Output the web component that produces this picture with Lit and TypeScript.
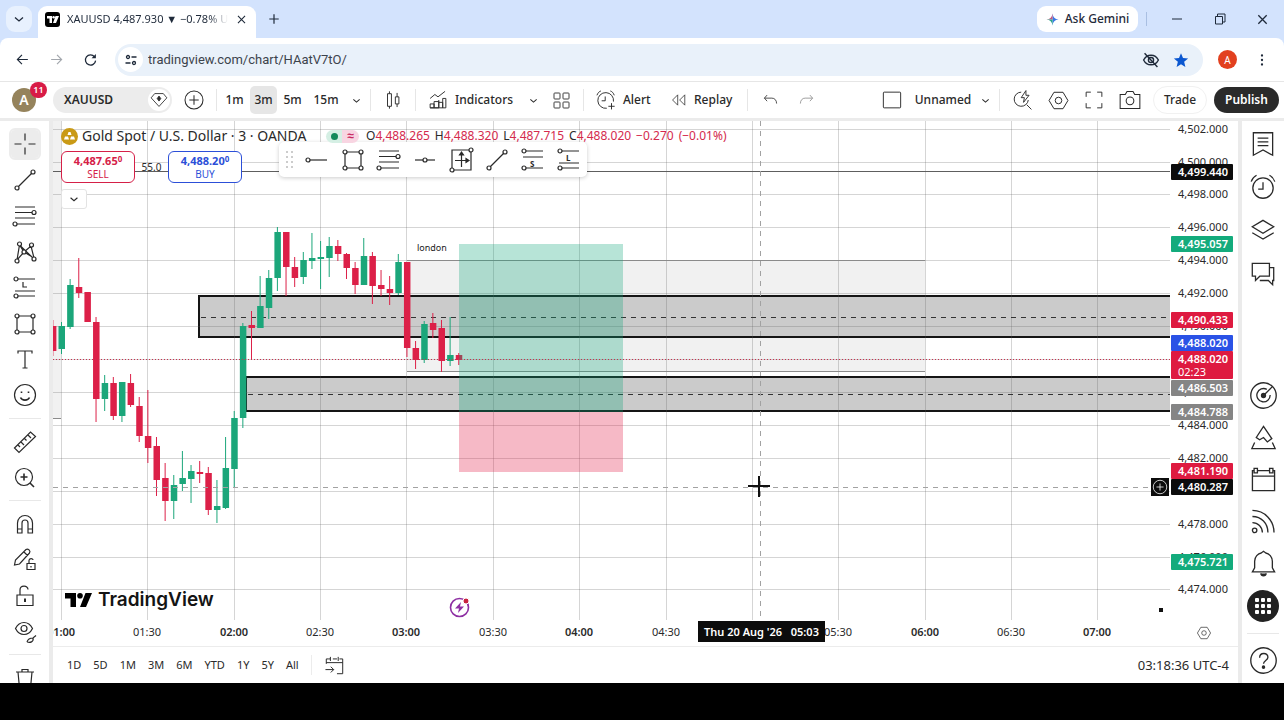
import { LitElement, html, svg, css } from "lit";
import { customElement } from "lit/decorators.js";
import { classMap } from "lit/directives/class-map.js";
import { styleMap } from "lit/directives/style-map.js";

const dot = (x: number, y: number, r = 2) => svg`<circle cx=${x} cy=${y} r=${r} fill="#fff"></circle>`;

/* Glyphs drawn on a 28 x 28 grid with a thin outline. */
const GLYPHS: Record<string, any> = {
  cross: svg`<path d="M14 3.500v7M14 17.500v7M3.500 14h7M17.500 14h7"/>`,
  trend: svg`<path d="M7 21L21 7"/>${dot(6, 22)}${dot(22, 6)}`,
  fib: svg`<path d="M4 5h20M4 10.500h18M4 16h20M6 22h18"/>${dot(23, 10.5)}${dot(4, 22)}`,
  pattern: svg`<path d="M6 22L8.500 7 13 14 20 8 23 20 13 14zM8.500 7L22 20"/>${dot(6, 23)}${dot(8.5, 6)}${dot(13, 14)}${dot(20.5, 7)}${dot(23, 21)}`,
  forecast: svg`<path d="M6 5h18M4 17h20M6 22h18M12 8v5h4"/>${dot(5, 5)}${dot(5, 22)}`,
  rect: svg`<path d="M6 6h16v16H6z"/>${dot(6, 6)}${dot(22, 6)}${dot(6, 22)}${dot(22, 22)}`,
  text: svg`<path d="M7 7.500V5h14v2.500M14 5v17M11.500 22h5"/>`,
  smile: svg`<circle cx="14" cy="13" r="10.500"/><path d="M9.500 15.500c1.500 3.500 7.500 3.500 9 0M10.500 9.500v1.500M17.500 9.500v1.500" stroke-width="1.600"/>`,
  ruler: svg`<path d="M3.500 20L19.500 4l5 4.500-16.500 16zM7 17l2 2M10 14l3 3M13.500 10.500l2 2M17 7l3 3"/>`,
  zoom: svg`<circle cx="13" cy="13" r="8.500"/><path d="M19 19l4 4M13 9.500v7M9.500 13h7" stroke-width="1.600"/>`,
  magnet: svg`<path d="M6.500 23V13a7.500 7.500 0 0 1 15 0v10H17V13a3 3 0 0 0-6 0v10zM6.500 19H11M17 19h4.500"/>`,
  pencilLock: svg`<path d="M3.500 19l1-5L15 3.500c2-1.500 5 1.500 3.500 3.500L8.500 18z M13 6l3.500 3.500M16 17.500h8v6h-8zM18 17v-2.500c0-2.500 4-2.500 4-.5M20 20v1.500"/>`,
  lock: svg`<path d="M6 13h16v10.500H6zM9 13V8c0-5 8-5 8-.5"/><path d="M14 16.500v3.500" stroke-width="2"/>`,
  eye: svg`<path d="M4.500 10.500c4-8 13-8 17 0-4 8-13 8-17 0z"/><circle cx="13" cy="10.500" r="3"/><path d="M16 24c1-3.500 3-4 6-4l3-2.500M22 20c1 4-3 5-6 4"/>`,
  trash: svg`<path d="M5 8h18M11 8V5.500h6V8M7 8l1.500 16h11L21 8"/>`,
  list: svg`<path d="M5 3.500h18v21l-9-5-9 5zM9 8.500h10M9 12h10M9 15.500h10"/>`,
  alarm: svg`<circle cx="14" cy="15" r="9.500"/><path d="M14 9.500V16H9.500M3 9c1-3 3-5 5-6M25 9c-1-3-3-5-5-6" />`,
  layers: svg`<path d="M14 5l10 6-10 6-10-6zM4 16.500l10 6 10-6"/>`,
  chat: svg`<path d="M4 5h16v12h-9l-4 4v-4H4zM20 9h4v12h-1v4l-4-4h-8"/>`,
  radar: svg`<circle cx="14" cy="14" r="11.500"/><path d="M17 8.500a6 6 0 1 0 3 5M14 14l8-8"/><circle cx="14" cy="14" r="1.800" fill="currentColor"/>`,
  hotlist: svg`<path d="M14 4l7.500 11-4 3-3.500-4-3.500 2-3-2zM6 18.500L3.500 24h21L22 18.500"/>`,
  calendar: svg`<path d="M9 6h10M5 6H4v18h20V6h-1M4 11h20M5.500 4h3v4h-3zM19.500 4h3v4h-3z"/>`,
  rss: svg`<circle cx="6" cy="22" r="2"/><path d="M4 15c5 0 9 4 9 9M4 9.500c8 0 14 6 14 14.500M4 4c11 0 19.500 9 19.500 20"/>`,
  bell: svg`<path d="M4 21.500h20l-2-3.500v-6c0-4-3-7-6-7.500L14 3l-2 1.500C9 5 6 8 6 12v6z"/><path d="M11.500 23c.5 3 4.500 3 5 0" fill="currentColor"/>`,
  help: svg`<circle cx="14" cy="14" r="11.500"/><path d="M10.500 11.500c0-5 7.500-5 7.500-.5 0 3-4 3-4 6"/><circle cx="14" cy="20" r="1" fill="currentColor"/>`,
  plusCircle: svg`<circle cx="14" cy="14" r="10.500"/><path d="M14 8.500v11M8.500 14h11"/>`,
  candles: svg`<path d="M7 6h5v16H7zM9.500 3v3M9.500 22v3M17 10h4.500v9H17zM19.200 5v5M19.200 19v4"/>`,
  indicators: svg`<path d="M4 24v-5h5v5zM9 24v-8h6v8zM15 24V14M15 17h5v7M20 24V12h4v12H4M4 12l6-5 4 3 9-7"/>`,
  grid: svg`<rect x="4" y="4" width="8" height="8" rx="1"/><rect x="16" y="4" width="8" height="8" rx="1"/><rect x="4" y="16" width="8" height="8" rx="1"/><rect x="16" y="16" width="8" height="8" rx="1"/>`,
  alert: svg`<path d="M23.500 16a10 10 0 1 0-8.500 8.500M13 9.500V15H8.500M2.500 8c1-3 3-5 5-5.500M24.500 8c-1-3-3-5-5-5.500M21 18v8M17 22h8"/>`,
  replay: svg`<path d="M12 6v16L4 14zM23 6v16l-8-8z"/>`,
  undo: svg`<path d="M9 6L5 10.500 9 15M5 10.500h11c4 0 7 3 7 8"/>`,
  redo: svg`<path d="M19 6l4 4.500-4 4.500M23 10.500H12c-4 0-7 3-7 8"/>`,
  square: svg`<rect x="3" y="4" width="22" height="20" rx="1"/>`,
  quick: svg`<path d="M13 4a9 9 0 1 0 9 10M20 20l6 6M19 2l-6 9h4l-1 6 7-9h-4z"/>`,
  hex: svg`<path d="M8.500 4h11l6 10-6 10h-11L2.500 14z"/><circle cx="14" cy="14" r="4"/>`,
  full: svg`<path d="M4 10V4h6M18 4h6v6M24 18v6h-6M10 24H4v-6"/>`,
  camera: svg`<path d="M2.500 7.500h6L10.500 4h7l2 3.500h6V24h-23z"/><circle cx="14" cy="15" r="4.500"/>`,
  diamond: svg`<path d="M8 5h12l5 6-11 12L3 11z"/><path d="M14 8.500l2.500 3.500-2.500 3.500-2.500-3.500z" fill="currentColor"/>`,
  chevron: svg`<path d="M6 11l8 7 8-7" stroke-width="2.600"/>`,
  ray: svg`<path d="M5 14h19"/>${dot(5, 14)}`,
  hline: svg`<path d="M4 14h20"/>${dot(14, 14)}`,
  longpos: svg`<path d="M5 4h19v20H5zM14.500 7v14M8 14.500h12"/><path d="M14.500 6l-2 3h4zM22 14.500l-3-2v4z" fill="currentColor"/>${dot(5, 24)}${dot(24, 4)}`,
  short: svg`<path d="M6 5h18M4 11h20M6 22h18"/><text class="tiny" x="11" y="20.500">S</text>${dot(5, 5)}${dot(5, 22)}`,
  long: svg`<path d="M6 5h18M4 17h20M6 22h18"/><text class="tiny" x="11" y="15">L</text>${dot(5, 5)}${dot(5, 22)}`,
  goto: svg`<path d="M7 6h2M12 6h5M20 6h4v18h-7M4 12V6h3M4 10.500h20M9 3.500v5M18.500 3.500v5M3 19h10M9.500 15.500L13 19l-3.500 3.500"/>`,
  back: svg`<path d="M24 14H5M13 5.500L4.500 14l8.500 8.500" stroke-width="2.200"/>`,
  forward: svg`<path d="M4 14h19M15 5.500l8.500 8.500-8.500 8.500" stroke-width="2.200"/>`,
  reload: svg`<path d="M21.500 9a9.500 9.500 0 1 0 2 7" stroke-width="2.400"/><path d="M24 3.500v8h-8z" fill="currentColor" stroke="none"/>`,
  tune: svg`<g stroke-width="2.600"><circle cx="8" cy="8" r="3"/><path d="M15 8h10M3 20h10"/><circle cx="20" cy="20" r="3"/></g>`,
  eyeOff: svg`<g stroke-width="2.200"><path d="M2.500 14c5-10 18-10 23 0-5 10-18 10-23 0zM4 3.500L24 25"/><circle cx="14" cy="14" r="4"/></g>`,
  star: svg`<path d="M14 2l3.500 8.500 9 .7-7 6 2.200 9L14 21.500 6.300 26.200l2.200-9-7-6 9-.7z" fill="#0b57d0" stroke="none"/>`,
  more: svg`<g fill="currentColor" stroke="none"><circle cx="14" cy="5" r="2.300"/><circle cx="14" cy="14" r="2.300"/><circle cx="14" cy="23" r="2.300"/></g>`,
  close: svg`<path d="M5 5l18 18M23 5L5 23" stroke-width="2.800"/>`,
  plus: svg`<path d="M14 3v22M3 14h22" stroke-width="2.800"/>`,
  min: svg`<path d="M4 14h20" stroke-width="2"/>`,
  restore: svg`<path d="M5 9h14v15H5zM9 9V4h15v16h-5" stroke-width="2"/>`,
  spark: svg`<path d="M14 1c1 8 5 12 13 13-8 1-12 5-13 13z" fill="#3b79e6" stroke="none"/><path d="M14 1v13H1C9 13 13 9 14 1z" fill="#c4567e" stroke="none"/><path d="M1 14h13v13C13 19 9 15 1 14z" fill="#2ea58a" stroke="none"/>`,
};

const glyph = (name: string, size = 28) => html`<svg
  class="glyph" width=${size} height=${size} viewBox="0 0 28 28" aria-hidden="true"
>${GLYPHS[name]}</svg>`;

const shared = css`
  * { box-sizing: border-box; }
  button, input { font: inherit; color: inherit; border: 0; background: none; padding: 0; margin: 0; }
  button { display: flex; align-items: center; justify-content: center; flex: none; white-space: nowrap; }
  .glyph { fill: none; stroke: currentColor; stroke-width: 1.2; display: block; flex: none; }
  .tiny { font: 700 8px "Noto Sans", sans-serif; fill: currentColor; stroke: none; }
`;

@customElement("browser-bar")
class BrowserBar extends LitElement {
  static styles = [shared, css`
    :host { display: block; background: #d3e3fd; color: #1f2a3a; font: 12px/16px "Noto Sans", sans-serif; }
    .strip { display: flex; height: 38px; align-items: center; padding-left: 6px; }
    .search { width: 26px; height: 26px; border-radius: 9px; background: #e8f1fe; }
    .tab { display: flex; align-items: center; align-self: flex-end; width: 218px; height: 32px; margin-left: 6px; padding: 0 9px 6px 7px; background: #fff; border-radius: 9px 9px 0 0; }
    .fav { width: 15px; height: 15px; flex: none; }
    .title { flex: 1; margin: 0 8px 0 7px; overflow: hidden; white-space: nowrap; font-size: 11px; -webkit-mask-image: linear-gradient(90deg, #000 88%, transparent); mask-image: linear-gradient(90deg, #000 88%, transparent); }
    .new { width: 36px; height: 28px; }
    .gem { margin-left: auto; width: 101px; height: 26px; gap: 6px; border-radius: 9px; background: #fff; font-weight: 500; }
    .rule { width: 1px; height: 14px; margin: 0 8px; background: #a9bfe2; }
    .win { width: 43px; height: 30px; }
    .nav { display: flex; height: 43px; align-items: center; background: #fff; border-radius: 8px 8px 0 0; padding: 0 5px; }
    .step { width: 34px; height: 30px; }
    .dim { color: #a3a7ad; }
    .address { display: flex; flex: 1; align-items: center; height: 32px; margin-left: 8px; padding: 0 7px 0 3px; border-radius: 16px; background: #e9f1fa; }
    .info { width: 25px; height: 25px; border-radius: 50%; background: #fff; }
    .url { flex: 1; min-width: 0; margin-left: 5px; font: 13px/18px Roboto, sans-serif; color: #3c434c; outline: 0; }
    .mark { width: 30px; height: 24px; }
    .avatar { width: 19px; height: 19px; border-radius: 50%; background: #e2401f; color: #fff; font-size: 10px; margin: 0 8px 0 15px; }
  `];
  render() {
    return html`
      <div class="strip">
        <button class="search" aria-label="Search tabs">${glyph("chevron", 14)}</button>
        <div class="tab">
          <svg class="fav" viewBox="0 0 15 15" aria-hidden="true"><rect width="15" height="15" rx="3"/><path d="M2 4h5v7H4.500V6.500H2zM10.500 4H14l-3 7H8z" fill="#fff"/><circle cx="8.600" cy="5.200" r="1.200" fill="#fff"/></svg>
          <span class="title">XAUUSD 4,487.930 ▼ −0.78% U</span>
          <button aria-label="Close tab">${glyph("close", 11)}</button>
        </div>
        <button class="new" aria-label="New tab">${glyph("plus", 12)}</button>
        <button class="gem">${glyph("spark", 13)}Ask Gemini</button>
        <span class="rule"></span>
        <button class="win" aria-label="Minimise">${glyph("min", 14)}</button>
        <button class="win" aria-label="Restore">${glyph("restore", 14)}</button>
        <button class="win" aria-label="Close">${glyph("close", 13)}</button>
      </div>
      <div class="nav">
        <button class="step" aria-label="Back">${glyph("back", 15)}</button>
        <button class="step dim" aria-label="Forward">${glyph("forward", 15)}</button>
        <button class="step" aria-label="Reload">${glyph("reload", 15)}</button>
        <div class="address">
          <button class="info" aria-label="Site information">${glyph("tune", 14)}</button>
          <input class="url" aria-label="Address" .value=${"tradingview.com/chart/HAatV7tO/"} />
          <button class="mark" aria-label="Tracking protection">${glyph("eyeOff", 18)}</button>
          <button class="mark" aria-label="Bookmark">${glyph("star", 16)}</button>
        </div>
        <button class="avatar" aria-label="Profile">A</button>
        <button class="step" aria-label="Menu">${glyph("more", 14)}</button>
      </div>`;
  }
}

@customElement("chart-header")
class ChartHeader extends LitElement {
  static styles = [shared, css`
    :host { display: flex; align-items: center; height: 36px; padding: 0 5px 0 12px; background: #fff; color: #2a2a2a; font: 500 12px/16px "Noto Sans", sans-serif; }
    button { height: 28px; border-radius: 5px; }
    .user { position: relative; width: 24px; height: 24px; border-radius: 50%; background: #95835c; color: #fff; font-size: 14px; font-weight: 600; margin-right: 17px; }
    .badge { position: absolute; left: 18px; top: -6px; width: 17px; height: 16px; border-radius: 8px; background: #d81b46; font-size: 9px; line-height: 16px; font-weight: 600; }
    .symbol { width: 119px; height: 26px; padding: 0 2px 0 11px; border-radius: 13px; background: #ececec; justify-content: space-between; font-weight: 600; }
    .flag { display: grid; place-items: center; width: 22px; height: 22px; border-radius: 50%; background: #fff; }
    .i36 { width: 36px; }
    .add { margin-left: 4px; }
    .rule { width: 1px; height: 22px; margin: 0 4px; background: #e6e6e6; }
    .time { width: 27px; margin-right: 2px; }
    .wide { width: 36px; }
    .on { background: #e6e6e6; }
    .drop { width: 20px; }
    .label { gap: 6px; justify-content: flex-start; padding-left: 7px; }
    .ind { width: 103px; }
    .alert { width: 75px; }
    .replay { width: 80px; }
    .right { display: flex; align-items: center; margin-left: auto; }
    .name { width: 98px; gap: 12px; }
    .dim { color: #8a8a8a; }
    .trade { width: 54px; border: 1px solid #f1f1f1; border-radius: 14px; margin: 0 7px 0 5px; }
    .publish { width: 65px; height: 26px; border-radius: 13px; background: #2a2a2a; color: #fff; font-weight: 600; }
  `];
  render() {
    return html`
      <button class="user" aria-label="Account, 11 notifications">A<span class="badge">11</span></button>
      <button class="symbol">XAUUSD<span class="flag">${glyph("diamond", 20)}</span></button>
      <button class="i36 add" aria-label="Compare">${glyph("plusCircle", 24)}</button>
      <span class="rule"></span>
      ${["1m", "3m", "5m", "15m"].map((t) => html`<button class=${classMap({ time: true, wide: t === "15m", on: t === "3m" })}>${t}</button>`)}
      <button class="drop" aria-label="Intervals">${glyph("chevron", 11)}</button>
      <span class="rule"></span>
      <button class="i36" aria-label="Candles">${glyph("candles", 22)}</button>
      <span class="rule"></span>
      <button class="label ind">${glyph("indicators", 22)}Indicators</button>
      <button class="drop" aria-label="Favourite indicators">${glyph("chevron", 11)}</button>
      <button class="i36" aria-label="Templates">${glyph("grid", 21)}</button>
      <span class="rule"></span>
      <button class="label alert">${glyph("alert", 22)}Alert</button>
      <button class="label replay">${glyph("replay", 18)}Replay</button>
      <span class="rule"></span>
      <button class="i36" aria-label="Undo">${glyph("undo", 19)}</button>
      <button class="i36 dim" aria-label="Redo">${glyph("redo", 19)}</button>
      <div class="right">
        <button class="name">${glyph("square", 22)}Unnamed</button>
        <button class="drop" aria-label="Layouts">${glyph("chevron", 11)}</button>
        <span class="rule"></span>
        <button class="i36" aria-label="Quick search">${glyph("quick", 22)}</button>
        <button class="i36" aria-label="Settings">${glyph("hex", 23)}</button>
        <button class="i36" aria-label="Fullscreen">${glyph("full", 22)}</button>
        <button class="i36" aria-label="Snapshot">${glyph("camera", 24)}</button>
        <button class="trade">Trade</button>
        <button class="publish">Publish</button>
      </div>`;
  }
}

@customElement("drawing-tools")
class DrawingTools extends LitElement {
  static styles = [shared, css`
    :host { display: flex; flex-direction: column; align-items: center; width: 49px; padding-top: 5px; background: #fff; color: #2a2a2a; overflow: hidden; }
    button { width: 36px; height: 36px; }
    .on .glyph { background: #ececec; border-radius: 4px; outline: 2px solid #ececec; }
    .rule { width: 32px; height: 1px; margin: 4px 0 5px; background: #e8e8e8; flex: none; }
  `];
  render() {
    const groups = [
      ["cross", "trend", "fib", "pattern", "forecast", "rect", "text", "smile"],
      ["ruler", "zoom"],
      ["magnet", "pencilLock", "lock", "eye"],
      ["trash"],
    ];
    return groups.map((names, i) => html`
      ${i ? html`<span class="rule"></span>` : ""}
      ${names.map((n) => html`<button class=${n === "cross" ? "on" : ""} aria-label=${n}>${glyph(n, 28)}</button>`)}`);
  }
}

@customElement("side-panel")
class SidePanel extends LitElement {
  static styles = [shared, css`
    :host { display: flex; flex-direction: column; align-items: center; width: 42px; padding: 1px 0 2px; background: #fff; color: #2a2a2a; overflow: hidden; }
    .top, .low { display: flex; flex-direction: column; }
    .top button { width: 42px; height: 43px; }
    .low { margin-top: auto; }
    .low button, .help { width: 42px; height: 42px; }
    .low .last { height: 44px; }
    .apps { display: grid; grid-template-columns: repeat(3, 4px); gap: 2px; place-content: center; width: 32px; height: 32px; border-radius: 50%; background: #222; }
    .cell { height: 4px; background: #fff; border-radius: 1px; }
    .rule { width: 32px; height: 1px; margin: 5px 0; background: #e8e8e8; flex: none; }
  `];
  render() {
    return html`
      <div class="top">${["list", "alarm", "layers", "chat"].map((n) => html`<button aria-label=${n}>${glyph(n, 30)}</button>`)}</div>
      <div class="low">
        ${["radar", "hotlist", "calendar", "rss", "bell"].map((n) => html`<button aria-label=${n}>${glyph(n, 31)}</button>`)}
        <button class="last" aria-label="Apps"><span class="apps">${Array.from({ length: 9 }, () => html`<span class="cell"></span>`)}</span></button>
      </div>
      <span class="rule"></span>
      <button class="help" aria-label="Help">${glyph("help", 31)}</button>`;
  }
}

/* Plot scales: price to vertical position, bar number to horizontal position. */
const priceY = (p: number) => 7.6 + (4502 - p) * 16.46;
const barX = (i: number) => 8.5 + i * 8.636;

/* bar, high, body top, body bottom, low, rising (positions down the plot) */
const BARS: number[][] = [
  [-1, 199, 205, 230, 235, 0], [0, 201, 205, 228, 233, 1], [1, 158, 164, 206, 208, 1], [2, 137, 166, 172, 177, 0],
  [3, 171, 171, 201, 201, 0], [4, 196, 201, 278, 301, 0], [5, 254, 262, 278, 290, 1], [6, 256, 262, 295, 299, 0],
  [7, 261, 261, 295, 301, 1], [8, 253, 262, 284, 286, 0], [9, 276, 285, 315, 321, 0], [10, 269, 315, 327, 342, 0],
  [11, 316, 325, 359, 375, 0], [12, 342, 357, 380, 400, 0], [13, 354, 364, 380, 398, 1], [14, 330, 357, 363, 370, 1],
  [15, 344, 350, 358, 382, 1], [16, 340, 351, 353, 362, 0], [17, 346, 352, 389, 394, 0], [18, 359, 385, 389, 402, 1],
  [19, 316, 347, 387, 388, 1], [20, 290, 297, 348, 366, 1], [21, 202, 205, 297, 307, 1], [22, 190, 204, 207, 238, 0],
  [23, 155, 185, 207, 207, 1], [24, 149, 157, 187, 198, 1], [25, 106, 111, 157, 170, 1], [26, 111, 111, 146, 175, 0],
  [27, 136, 146, 157, 166, 0], [28, 131, 139, 156, 163, 1], [29, 112, 137, 140, 148, 1], [30, 120, 136, 138, 168, 1],
  [31, 116, 125, 137, 156, 1], [32, 119, 125, 133, 140, 0], [33, 132, 133, 147, 158, 0], [34, 141, 147, 164, 173, 0],
  [35, 117, 135, 164, 164, 1], [36, 131, 135, 165, 183, 0], [37, 149, 164, 168, 175, 0], [38, 155, 168, 172, 184, 0],
  [39, 133, 141, 172, 174, 1], [40, 141, 141, 227, 236, 0], [41, 220, 227, 239, 248, 0], [42, 200, 203, 239, 242, 1],
  [43, 192, 202, 209, 217, 0], [44, 199, 207, 240, 251, 0], [45, 196, 234, 240, 245, 1], [46, 232, 234, 239, 244, 0],
];

@customElement("price-chart")
class PriceChart extends LitElement {
  static styles = [shared, css`
    :host { display: grid; grid-template: minmax(0, 1fr) 27px 36px / minmax(0, 1fr) 68px; flex: 1; min-width: 0; background: #fff; color: #2a2a2a; font: 11px/14px "Noto Sans", sans-serif; }
    .plot { position: relative; overflow: hidden; }
    .canvas { position: absolute; inset: 0; width: 100%; height: 100%; display: block; }
    .grid { stroke: #5c5c5c; stroke-opacity: .26; shape-rendering: crispEdges; }
    .shade { fill: #f1f1f1; }
    .edge { stroke: #8b8b8b; }
    .zone { fill: #cbcbcb; stroke: #151515; stroke-width: 2; }
    .mid { stroke: #333; stroke-dasharray: 5 5; }
    .up { fill: #1ba67a; stroke: #1ba67a; }
    .down { fill: #dc2048; stroke: #dc2048; }
    .body { stroke: none; }
    .profit { fill: #12a57b; fill-opacity: .3; }
    .loss { fill: #e4254f; fill-opacity: .32; }
    .last { stroke: #c9304f; stroke-dasharray: 1 2; }
    .level { stroke: #5e5e5e; }
    .aim { stroke: #a2a2a2; stroke-dasharray: 5 5; }
    .pointer { stroke: #111; stroke-width: 2; }
    .note { font: 9px "Noto Sans", sans-serif; fill: #222; }
    .over { position: absolute; left: 8px; top: 4px; }
    .legend { display: flex; align-items: center; height: 22px; font-size: 12px; white-space: nowrap; }
    .coin { width: 17px; height: 17px; margin-right: 4px; flex: none; }
    .name { width: 244px; font-size: 14px; }
    .state { display: flex; align-items: center; justify-content: space-around; width: 33px; height: 13px; border-radius: 7px; background: linear-gradient(90deg, #d5efe4 50%, #f8d5e2 50%); color: #c92760; font-weight: 700; margin-right: 7px; }
    .live { width: 7px; height: 7px; border-radius: 50%; background: #128a5b; }
    .ohlc { display: flex; gap: 5px; }
    .fall { color: #d42a4d; }
    .deal { display: flex; align-items: center; margin-top: 4px; }
    .deal button { flex-direction: column; width: 74px; height: 32px; border: 1px solid; border-radius: 6px; background: #fff; font-size: 10px; line-height: 13px; }
    .deal .sell { color: #d52048; }
    .deal .buy { color: #2c4fd8; }
    .quote { font-size: 11px; font-weight: 700; line-height: 15px; }
    .pip { font-size: 8px; vertical-align: 3px; line-height: 8px; }
    .spread { width: 33px; text-align: center; font-size: 10px; }
    .fold { width: 26px; height: 20px; margin-top: 6px; border: 1px solid #e3e3e3; border-radius: 3px; background: #fff; }
    .palette { position: absolute; left: 226px; top: 21px; display: flex; align-items: center; width: 308px; height: 35px; padding-left: 7px; border-radius: 5px; background: #fff; box-shadow: 0 1px 4px #0003; }
    .palette button { width: 36px; height: 32px; }
    .grip { display: grid; grid-template-columns: 2px 2px; gap: 3px; width: 15px; }
    .speck { width: 2px; height: 2px; background: #ccc; }
    .brand { position: absolute; left: 12px; bottom: 8px; display: flex; align-items: center; gap: 6px; color: #141414; font: 600 19px/24px Inter, sans-serif; }
    .flash { position: absolute; left: 396px; bottom: 2px; width: 21px; height: 21px; }
    .axis { position: relative; }
    .price { position: absolute; left: 1px; width: 62px; height: 16px; margin-top: -8px; padding-left: 7px; line-height: 16px; white-space: nowrap; }
    .tag { color: #fff; font-weight: 600; border-radius: 1px; }
    .tall { height: 28px; line-height: 13px; padding-top: 1px; }
    .black { background: #0c0c0c; }
    .green { background: #13ab7c; }
    .red { background: #de1a40; }
    .blue { background: #2a52e6; }
    .grey { background: #858585; }
    .left { font-weight: 400; }
    .add { position: absolute; left: -19px; width: 18px; height: 18px; margin-top: -9px; background: #0c0c0c; color: #fff; }
    .bead { position: absolute; left: -11px; bottom: 8px; width: 4px; height: 4px; background: #111; }
    .times { position: relative; overflow: hidden; border-bottom: 1px solid #ececec; }
    .time { position: absolute; top: 5px; width: 40px; margin-left: -20px; text-align: center; }
    .hour { font-weight: 600; }
    .moment { position: absolute; left: 645px; top: 1px; width: 127px; height: 21px; background: #0c0c0c; color: #fff; font-weight: 600; line-height: 22px; text-align: center; white-space: pre; }
    .corner { display: flex; align-items: center; justify-content: center; border-bottom: 1px solid #ececec; }
    .ranges { grid-column: 1 / -1; display: flex; align-items: center; padding: 0 9px 0 14px; }
    .ranges button { height: 24px; margin-right: 12px; }
    .rule { width: 1px; height: 20px; margin-right: 11px; background: #ececec; }
    .ranges .clock { margin: 0 0 0 auto; font-size: 13px; }
  `];

  ticks = Array.from({ length: 15 }, (_, i) => 4502 - i * 2);
  halfHours = Array.from({ length: 13 }, (_, i) => i);

  /* Axis labels that lie wholly beneath a price tag are left out. */
  covered = [4488, 4480];

  chip(price: number, y: number, tone: string, extra = "") {
    const text = price.toLocaleString("en-US", { minimumFractionDigits: 3 });
    return html`<div class=${`price tag ${tone} ${extra ? "tall" : ""}`} style=${styleMap({ top: `${y}px` })}>${text}${extra ? html`<br /><span class="left">${extra}</span>` : ""}</div>`;
  }

  render() {
    return html`
      <div class="plot">
        <svg class="canvas" role="img" aria-label="XAUUSD three minute candles">
          <rect class="shade" x="0" y="0" width="8" height="297"/>
          <path class="edge" d="M0 297.500h8"/>
          <rect class="shade" x="354" y="140" width="518" height="111"/>
          <rect class="zone" x="146" y="175" width="110%" height="41"/>
          <rect class="zone" x="193" y="256" width="110%" height="34"/>
          ${this.ticks.map((p) => svg`<line class="grid" x1="0" x2="100%" y1=${Math.round(priceY(p)) + 0.5} y2=${Math.round(priceY(p)) + 0.5}></line>`)}
          ${this.halfHours.map((i) => svg`<line class="grid" y1="0" y2="100%" x1=${Math.floor(barX(i * 10)) + 0.5} x2=${Math.floor(barX(i * 10)) + 0.5}></line>`)}
          <path class="edge" d="M354 139.500h518M354 250.500h518"/>
          <line class="mid" x1="148" x2="100%" y1="196.500" y2="196.500"/>
          <line class="mid" x1="195" x2="100%" y1="273.500" y2="273.500"/>
          <line class="level" x1="0" x2="100%" y1="50.500" y2="50.500"/>
          ${BARS.map(([i, hi, top, bottom, lo, rise]) => svg`<g class=${rise ? "up" : "down"}>
            <line x1=${barX(i)} x2=${barX(i)} y1=${hi} y2=${lo}></line>
            <rect class="body" x=${barX(i) - 3} y=${top} width="6.500" height=${bottom - top}></rect></g>`)}
          <rect class="profit" x="406" y="123" width="164" height="168"/>
          <rect class="loss" x="406" y="291" width="164" height="60"/>
          <line class="last" x1="0" x2="100%" y1="238.500" y2="238.500"/>
          <line class="aim" x1="0" x2="100%" y1="366.500" y2="366.500"/>
          <line class="aim" x1="707.500" x2="707.500" y1="0" y2="100%"/>
          <path class="pointer" d="M706 355v21M695 365h22"/>
          <text class="note" x="364" y="130">london</text>
        </svg>

        <div class="palette">
          <span class="grip">${Array.from({ length: 8 }, () => html`<span class="speck"></span>`)}</span>
          ${["ray", "rect", "fib", "hline", "longpos", "trend", "short", "long"].map((n) => html`<button aria-label=${n}>${glyph(n, 28)}</button>`)}
        </div>

        <div class="over">
          <div class="legend">
            <svg class="coin" viewBox="0 0 17 17" aria-hidden="true"><circle cx="8.500" cy="8.500" r="8.500" fill="#c99a16"/><path d="M6.500 7l1-3h2l1 3zM3 11.500l1-3h3l1 3zM9 11.500l1-3h3l1 3z" fill="#fff"/></svg>
            <span class="name">Gold Spot / U.S. Dollar · 3 · OANDA</span>
            <span class="state"><span class="live"></span>≈</span>
            <span class="ohlc">
              ${[["O", "4,488.265"], ["H", "4,488.320"], ["L", "4,487.715"], ["C", "4,488.020"]].map(([k, v]) => html`<span>${k}<span class="fall">${v}</span></span>`)}
              <span class="fall">−0.270</span><span class="fall">(−0.01%)</span>
            </span>
          </div>
          <div class="deal">
            <button class="sell"><span class="quote">4,487.65<span class="pip">0</span></span>SELL</button>
            <span class="spread">55.0</span>
            <button class="buy"><span class="quote">4,488.20<span class="pip">0</span></span>BUY</button>
          </div>
          <button class="fold" aria-label="Collapse">${glyph("chevron", 12)}</button>
        </div>

        <div class="brand">
          <svg width="27" height="14" viewBox="0 0 27 14" aria-hidden="true"><path d="M0 0h11v14H5.500V5.500H0zM20.500 0H27l-6 14h-6z"/><circle cx="15" cy="2.800" r="2.800"/></svg>
          TradingView
        </div>
        <svg class="flash" viewBox="0 0 21 21" aria-hidden="true"><circle cx="10.500" cy="10.500" r="9" fill="#fff" stroke="#8e2fa3" stroke-width="1.600"/><path d="M12 5l-6 6.500h4L9 16l6-6.500h-4z" fill="#8e2fa3"/><circle cx="17" cy="4" r="3" fill="#c9233f" stroke="#fff"/></svg>
      </div>

      <div class="axis">
        ${this.ticks.filter((p) => !this.covered.includes(p)).map((p) => html`<div class="price" style=${styleMap({ top: `${Math.round(priceY(p))}px` })}>${p.toLocaleString("en-US", { minimumFractionDigits: 3 })}</div>`)}
        ${this.chip(4499.44, 51, "black")}
        ${this.chip(4495.057, 123, "green")}
        ${this.chip(4490.433, 199, "red")}
        ${this.chip(4486.503, 267, "grey")}
        ${this.chip(4488.02, 222, "blue")}
        ${this.chip(4488.02, 238, "red", "02:23")}
        ${this.chip(4484.788, 291, "grey")}
        ${this.chip(4481.19, 350, "red")}
        ${this.chip(4480.287, 366, "black")}
        ${this.chip(4475.721, 441, "green")}
        <button class="add" style=${styleMap({ top: "366px" })} aria-label="Add at price">${glyph("plusCircle", 18)}</button>
        <span class="bead"></span>
      </div>

      <div class="times">
        ${this.halfHours.filter((i) => i !== 8).map((i) => html`<span class=${classMap({ time: true, hour: i % 2 === 0 })} style=${styleMap({ left: `${Math.floor(barX(i * 10))}px` })}>0${1 + Math.floor(i / 2)}:${i % 2 ? "30" : "00"}</span>`)}
        <span class="moment">Thu 20 Aug '26   05:03</span>
      </div>
      <div class="corner">${glyph("hex", 16)}</div>

      <div class="ranges">
        ${["1D", "5D", "1M", "3M", "6M", "YTD", "1Y", "5Y", "All"].map((r) => html`<button>${r}</button>`)}
        <span class="rule"></span>
        <button aria-label="Go to date">${glyph("goto", 23)}</button>
        <button class="clock">03:18:36 UTC-4</button>
      </div>`;
  }
}

@customElement("app-root")
class AppRoot extends LitElement {
  static styles = css`
    :host { display: flex; flex-direction: column; height: 100vh; min-height: 480px; background: #000; }
    .head { border-top: 1px solid #e6e6e6; border-bottom: 3px solid #ebebeb; }
    .work { display: flex; flex: 1; min-height: 0; gap: 4px; background: #ebebeb; }
    .foot { height: 37px; background: #000; flex: none; }
  `;
  render() {
    return html`
      <browser-bar></browser-bar>
      <div class="head"><chart-header></chart-header></div>
      <main class="work">
        <drawing-tools></drawing-tools>
        <price-chart></price-chart>
        <side-panel></side-panel>
      </main>
      <div class="foot"></div>`;
  }
}
